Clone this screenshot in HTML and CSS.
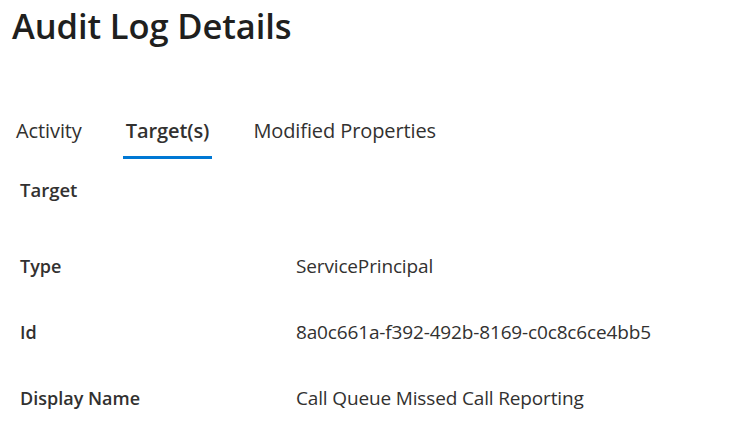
FILE: index.html
```html
<!DOCTYPE html>
<html>
<head>
<meta charset="utf-8">
<link rel="stylesheet" href="styles.css">
</head>
<body>
<div class="page">
  <h1 class="title">Audit Log Details</h1>
  <nav class="tabs">
    <div class="tab">Activity</div>
    <div class="tab active">Target(s)</div>
    <div class="tab">Modified Properties</div>
  </nav>
  <div class="section-title">Target</div>
  <div class="props">
    <div class="label">Type</div>
    <div class="value">ServicePrincipal</div>
    <div class="label">Id</div>
    <div class="value">8a0c661a-f392-492b-8169-c0c8c6ce4bb5</div>
    <div class="label">Display Name</div>
    <div class="value">Call Queue Missed Call Reporting</div>
  </div>
</div>
</body>
</html>
```
FILE: styles.css
```css
html, body {
  margin: 0;
  padding: 0;
  background: #ffffff;
}
body {
  font-family: "Open Sans", "Noto Sans", sans-serif;
  color: #323130;
}
.page {
  padding: 2px 0 0 12px;
}
.title {
  margin: 0;
  font-size: 34.5px;
  font-weight: 600;
  line-height: 48px;
  color: #201f1e;
  letter-spacing: -0.1px;
}
.tabs {
  display: flex;
  gap: 38px;
  margin-top: 62px;
  margin-left: 1px;
}
.tab {
  font-size: 20px;
  line-height: 30px;
  padding: 4px 3px 10px;
  color: #323130;
  letter-spacing: -0.1px;
  border-bottom: 3px solid transparent;
}
.tab.active {
  font-weight: 600;
  border-bottom-color: #0078d4;
}
.section-title {
  font-size: 18.5px;
  font-weight: 600;
  margin: 18px 0 0 8px;
  line-height: 26px;
}
.props {
  display: grid;
  grid-template-columns: 276px auto;
  row-gap: 40px;
  margin: 50px 0 0 8px;
  font-size: 18px;
  line-height: 26px;
}
.label {
  font-weight: 600;
}
.value {
  font-size: 19px;
  letter-spacing: -0.15px;
}
```
